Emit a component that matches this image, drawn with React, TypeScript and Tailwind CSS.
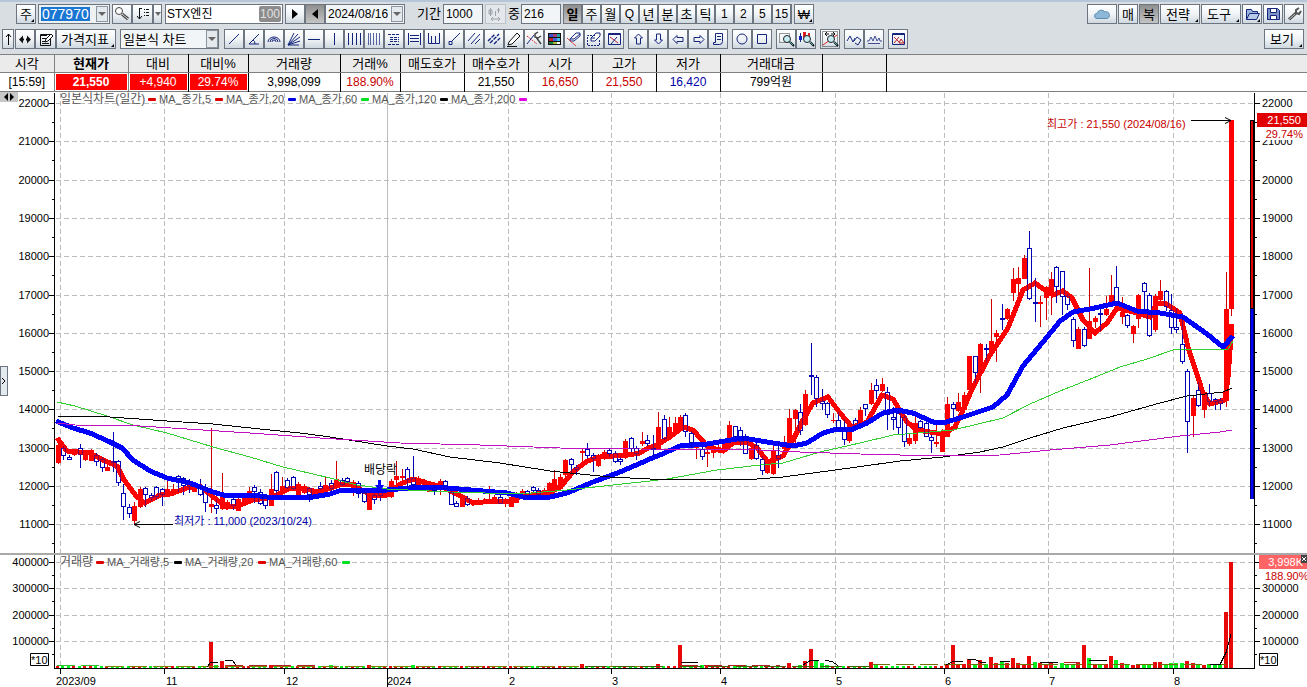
import type { ReactNode } from 'react';
import clsx from 'clsx';

type Candle = [kind: 'r' | 'b', high: number, top: number, bottom: number, low: number];

const FIRST_X = 58;
const STEP = 5.456;

// one entry per trading day: r = up, b = down
const candles: Candle[] = [
  ['r', 440, 445, 463, 464], ['b', 446, 448, 456, 460], ['b', 455, 457, 460, 460], ['r', 449, 450, 455, 456],
  ['b', 444, 448, 455, 468], ['r', 450, 451, 460, 461], ['r', 449, 450, 461, 461], ['b', 453, 455, 462, 466],
  ['b', 457, 459, 468, 472], ['r', 465, 467, 471, 471], ['b', 432, 461, 463, 472], ['b', 460, 461, 483, 486],
  ['b', 484, 493, 507, 520], ['b', 504, 507, 514, 518], ['r', 502, 506, 521, 524], ['r', 487, 489, 507, 508],
  ['b', 487, 488, 495, 507], ['b', 493, 495, 498, 501], ['b', 486, 487, 497, 500], ['b', 488, 489, 495, 506],
  ['r', 478, 489, 495, 496], ['r', 484, 489, 495, 496], ['b', 475, 476, 480, 492], ['b', 477, 478, 486, 495],
  ['b', 479, 482, 487, 493], ['r', 484, 486, 492, 492], ['b', 479, 487, 495, 496], ['b', 484, 487, 503, 512],
  ['r', 428, 504, 507, 513], ['b', 500, 505, 509, 514], ['r', 473, 497, 509, 510], ['r', 500, 502, 509, 510],
  ['b', 498, 499, 506, 510], ['r', 496, 499, 511, 511], ['r', 495, 497, 504, 505], ['r', 487, 491, 500, 501],
  ['b', 485, 487, 492, 503], ['b', 489, 492, 504, 505], ['b', 494, 496, 506, 509], ['r', 474, 489, 506, 506],
  ['b', 471, 472, 491, 495], ['r', 477, 486, 493, 494], ['b', 478, 480, 488, 489], ['b', 476, 477, 489, 490],
  ['r', 482, 484, 495, 495], ['r', 484, 486, 493, 494], ['b', 487, 488, 495, 502], ['r', 489, 490, 496, 497],
  ['b', 482, 486, 489, 490], ['r', 477, 485, 493, 494], ['b', 480, 483, 489, 492], ['r', 461, 479, 488, 490],
  ['b', 478, 480, 485, 486], ['b', 477, 478, 482, 483], ['r', 480, 482, 491, 496], ['b', 481, 483, 494, 498],
  ['b', 490, 493, 502, 503], ['r', 489, 490, 510, 510], ['b', 493, 495, 500, 504], ['b', 489, 491, 496, 501],
  ['r', 490, 491, 497, 498], ['r', 479, 481, 497, 498], ['r', 461, 476, 480, 489], ['r', 469, 476, 478, 489],
  ['b', 467, 469, 480, 488], ['b', 456, 478, 485, 487], ['r', 476, 478, 486, 487], ['r', 479, 480, 486, 487],
  ['r', 483, 485, 492, 492], ['b', 485, 487, 491, 495], ['r', 479, 481, 488, 495], ['b', 480, 481, 489, 490],
  ['b', 490, 492, 505, 505], ['b', 501, 503, 507, 507], ['r', 496, 497, 507, 507], ['b', 496, 498, 505, 506],
  ['r', 500, 502, 505, 506], ['r', 498, 500, 504, 505], ['r', 498, 500, 503, 504], ['r', 486, 499, 503, 504],
  ['r', 495, 497, 502, 503], ['b', 495, 497, 504, 504], ['r', 498, 499, 504, 507], ['r', 495, 497, 507, 507],
  ['r', 492, 493, 503, 503], ['r', 489, 491, 496, 496], ['b', 490, 491, 496, 497], ['b', 486, 487, 491, 492],
  ['b', 488, 490, 495, 496], ['r', 488, 490, 498, 499], ['r', 482, 483, 495, 496], ['r', 470, 479, 492, 493],
  ['r', 474, 477, 489, 490], ['r', 459, 460, 475, 482], ['b', 458, 459, 465, 473], ['b', 465, 467, 470, 475],
  ['r', 448, 451, 453, 463], ['b', 443, 449, 456, 459], ['b', 453, 455, 459, 472], ['r', 454, 457, 466, 467],
  ['r', 450, 452, 459, 460], ['b', 448, 450, 454, 457], ['b', 451, 453, 462, 463], ['b', 457, 459, 462, 465],
  ['r', 439, 441, 458, 459], ['b', 437, 438, 449, 452], ['b', 446, 448, 454, 460], ['r', 432, 441, 444, 446],
  ['b', 435, 440, 444, 446], ['b', 435, 448, 450, 457], ['r', 412, 427, 449, 450], ['b', 415, 419, 439, 440],
  ['r', 417, 427, 437, 438], ['r', 417, 423, 431, 432], ['r', 415, 417, 427, 428], ['b', 413, 415, 432, 437],
  ['b', 431, 433, 443, 448], ['r', 443, 446, 448, 459], ['b', 447, 449, 457, 460], ['r', 450, 452, 454, 467],
  ['r', 443, 447, 453, 458], ['r', 440, 447, 452, 453], ['r', 441, 443, 452, 453], ['r', 421, 425, 446, 447],
  ['b', 426, 426, 437, 438], ['b', 427, 430, 442, 446], ['b', 434, 436, 454, 454], ['r', 446, 448, 459, 460],
  ['b', 443, 445, 459, 460], ['b', 456, 459, 471, 475], ['r', 459, 462, 473, 474], ['r', 441, 450, 474, 475],
  ['b', 442, 455, 459, 468], ['r', 436, 444, 449, 450], ['r', 409, 418, 446, 447], ['r', 409, 410, 419, 444],
  ['b', 404, 412, 431, 435], ['r', 390, 394, 425, 426], ['b', 343, 375, 377, 395], ['b', 375, 377, 399, 407],
  ['b', 389, 401, 404, 410], ['b', 402, 403, 415, 418], ['r', 413, 420, 421, 423], ['b', 412, 420, 429, 430],
  ['b', 419, 428, 440, 445], ['r', 420, 423, 441, 443], ['b', 418, 420, 426, 428], ['r', 407, 410, 422, 423],
  ['b', 404, 404, 409, 416], ['r', 383, 390, 404, 405], ['b', 379, 385, 391, 399], ['r', 378, 384, 391, 392],
  ['b', 387, 392, 415, 430], ['b', 407, 417, 420, 430], ['b', 411, 413, 428, 434], ['b', 415, 417, 442, 447],
  ['r', 434, 438, 444, 446], ['r', 416, 423, 441, 444], ['b', 420, 421, 428, 429], ['b', 421, 423, 437, 437],
  ['b', 435, 437, 441, 453], ['r', 424, 442, 444, 447], ['r', 429, 435, 452, 452], ['r', 397, 404, 437, 437],
  ['b', 402, 404, 409, 418], ['r', 393, 402, 411, 412], ['r', 392, 395, 410, 411], ['r', 356, 356, 390, 391],
  ['b', 356, 356, 373, 383], ['r', 343, 344, 371, 393], ['b', 344, 348, 350, 362], ['r', 299, 341, 352, 353],
  ['r', 330, 333, 337, 362], ['b', 304, 318, 320, 330], ['r', 308, 309, 319, 320], ['r', 268, 279, 293, 301],
  ['r', 267, 278, 284, 297], ['r', 255, 258, 279, 279], ['b', 231, 248, 299, 300], ['b', 278, 302, 304, 322],
  ['r', 296, 302, 304, 327], ['r', 286, 287, 298, 320], ['r', 272, 279, 295, 315], ['b', 266, 267, 287, 303],
  ['b', 271, 271, 297, 315], ['b', 294, 296, 305, 310], ['b', 317, 319, 341, 347], ['r', 327, 329, 349, 349],
  ['b', 327, 329, 346, 347], ['r', 268, 321, 339, 339], ['r', 316, 318, 322, 328], ['b', 308, 313, 315, 331],
  ['r', 296, 309, 315, 316], ['r', 275, 295, 304, 305], ['b', 266, 287, 302, 303], ['r', 297, 312, 317, 324],
  ['b', 314, 315, 326, 328], ['r', 325, 326, 334, 343], ['r', 294, 295, 319, 328], ['b', 282, 283, 292, 310],
  ['b', 293, 295, 336, 337], ['r', 294, 296, 330, 332], ['r', 280, 291, 300, 301], ['b', 290, 291, 307, 311],
  ['b', 294, 310, 328, 334], ['b', 308, 327, 330, 333], ['b', 313, 344, 362, 364], ['b', 369, 371, 422, 453],
  ['r', 395, 398, 416, 437], ['b', 382, 390, 406, 407], ['r', 390, 392, 410, 418], ['b', 384, 393, 402, 406],
  ['b', 398, 399, 402, 410], ['b', 398, 400, 404, 410], ['r', 272, 309, 401, 407], ['r', 120, 120, 309, 316],
];

// bar heights for the days with notable volume
const spikes: Record<number, number> = {
  28: 26, 29: 3, 30: 7, 39: 3, 50: 3, 57: 3, 65: 3, 96: 4, 110: 4, 114: 23, 116: 3, 118: 3, 124: 3, 126: 3,
  134: 5, 136: 3, 137: 7, 138: 19, 139: 8, 140: 5, 141: 3, 149: 6, 150: 3, 163: 4, 164: 23, 165: 4, 166: 4,
  167: 9, 168: 4, 169: 8, 170: 4, 171: 11, 172: 5, 173: 6, 174: 5, 175: 10, 176: 5, 177: 4, 178: 12, 179: 6,
  180: 5, 181: 4, 182: 5, 184: 5, 185: 3, 186: 3, 187: 5, 188: 23, 189: 10, 190: 3, 191: 3, 192: 4, 193: 12,
  194: 8, 195: 5, 196: 4, 197: 3, 198: 4, 199: 4, 200: 4, 201: 6, 202: 6, 203: 4, 204: 5, 205: 5, 206: 5,
  207: 7, 208: 5, 209: 4, 210: 3, 211: 4, 212: 3, 213: 4, 214: 56, 215: 106,
};
const upDays = [138, 164, 178, 188, 207];
const downDays = [189];

const MA5 =
  '57,438 67,451 90,453 103,460 117,466 124,480 137,497 145,503 160,495 170,494 187,488 200,486 217,500 227,507 238,506 253,500 267,498 277,495 290,488 303,488 317,492 328,489 342,484 353,485 365,492 375,496 387,495 400,484 413,479 427,483 443,487 457,494 473,503 493,501 510,501 520,497 537,494 550,493 562,485 573,472 587,461 600,457 613,456 628,455 640,453 648,448 657,445 670,437 683,427 693,430 708,447 723,451 733,443 747,442 757,448 768,462 783,456 793,440 803,420 813,403 828,397 840,413 852,427 867,422 882,395 893,399 907,422 917,430 930,432 943,434 955,427 963,410 973,387 990,355 1008,328 1023,290 1035,283 1045,290 1053,295 1063,291 1072,298 1083,320 1095,333 1107,323 1117,308 1133,312 1150,317 1157,303 1165,303 1180,313 1188,347 1203,393 1210,404 1225,400 1228,377 1232,324';
const MA20 =
  '56,421 73,428 90,433 110,442 122,448 133,460 150,471 167,478 190,483 213,492 227,496 253,495 267,497 313,497 330,494 342,490 387,490 420,487 447,488 507,493 523,497 550,497 567,493 593,482 620,472 650,459 660,455 680,446 707,444 743,438 773,443 793,446 807,443 823,433 837,429 853,429 867,423 883,413 897,410 913,413 933,422 943,423 963,417 993,407 1007,395 1023,366 1043,342 1060,321 1073,312 1090,309 1117,303 1137,311 1160,313 1183,317 1207,334 1223,347 1233,336';
const MA60 =
  '57,402 75,406 107,416 133,425 167,433 213,447 250,457 283,467 313,474 330,478 357,485 387,489 450,492 520,494 567,490 650,481 667,479 717,470 760,465 783,463 820,452 860,443 893,435 930,432 953,430 1003,418 1030,404 1060,391 1093,378 1120,367 1147,359 1173,350 1187,349 1228,349 1233,341';
const MA120 =
  '57,416 110,417 167,421 213,424 260,429 300,433 330,437 387,446 413,449 450,457 500,463 550,471 610,477 650,479 757,479 783,477 850,468 900,461 943,457 980,452 1003,447 1030,438 1063,428 1110,417 1160,403 1187,396 1223,392 1232,388';
const MA200 =
  '57,423 75,425 140,426 187,429 250,433 320,438 400,443 480,445 560,448 640,449 760,450 800,452 860,454 940,456 1000,455 1050,450 1110,445 1180,436 1220,432 1232,430';

const prices = Array.from({ length: 12 }, (_, i) => ({
  label: 22000 - i * 1000,
  y: Math.round(103 + i * 38.3),
}));
const volumes = [
  { label: 400000, y: 562 },
  { label: 300000, y: 588 },
  { label: 200000, y: 615 },
  { label: 100000, y: 641 },
];
const months = [
  { label: '2023/09', x: 60, at: 56 },
  { label: '11', x: 164, at: 166 },
  { label: '12', x: 284, at: 286 },
  { label: '2024', x: 387, at: 387 },
  { label: '2', x: 508, at: 509 },
  { label: '3', x: 611, at: 612 },
  { label: '4', x: 720, at: 721 },
  { label: '5', x: 835, at: 836 },
  { label: '6', x: 944, at: 945 },
  { label: '7', x: 1048, at: 1049 },
  { label: '8', x: 1173, at: 1174 },
];

interface LegendItem {
  text: string;
  x: number;
  dash: number;
  color: string;
  size?: number;
}

const legend: LegendItem[] = [
  { text: '일본식차트(일간)', x: 60, dash: 148, color: '#e00000', size: 12 },
  { text: 'MA_종가,5', x: 159, dash: 215, color: '#e00000' },
  { text: 'MA_종가,20', x: 226, dash: 288, color: '#0000e0' },
  { text: 'MA_종가,60', x: 299, dash: 361, color: '#00e020' },
  { text: 'MA_종가,120', x: 372, dash: 440, color: '#000' },
  { text: 'MA_종가,200', x: 451, dash: 519, color: '#e000e0' },
];
const volumeLegend: LegendItem[] = [
  { text: '거래량', x: 60, dash: 96, color: '#e00000', size: 12 },
  { text: 'MA_거래량,5', x: 107, dash: 174, color: '#000' },
  { text: 'MA_거래량,20', x: 185, dash: 258, color: '#e00000' },
  { text: 'MA_거래량,60', x: 269, dash: 342, color: '#00e020' },
];

const quote = [
  { title: '시각', value: '[15:59]', width: 'w-[54px]' },
  { title: '현재가', value: '21,550', width: 'w-[74px]', fill: true, bold: true },
  { title: '대비', value: '+4,940', width: 'w-[60px]', fill: true },
  { title: '대비%', value: '29.74%', width: 'w-[60px]', fill: true },
  { title: '거래량', value: '3,998,099', width: 'w-[92px]' },
  { title: '거래%', value: '188.90%', width: 'w-[60px]', color: 'text-[#c80000]' },
  { title: '매도호가', value: '', width: 'w-[64px]' },
  { title: '매수호가', value: '21,550', width: 'w-[64px]' },
  { title: '시가', value: '16,650', width: 'w-[64px]', color: 'text-[#c80000]' },
  { title: '고가', value: '21,550', width: 'w-[64px]', color: 'text-[#c80000]' },
  { title: '저가', value: '16,420', width: 'w-[64px]', color: 'text-[#0000a8]' },
  { title: '거래대금', value: '799억원', width: 'w-[102px]' },
  { title: '', value: '', width: 'w-[64px]' },
  { title: '', value: '', width: 'w-auto' },
];

interface BtnProps {
  children: ReactNode;
  label?: string;
  width?: string;
  active?: boolean;
  menu?: boolean;
}

function Btn({ children, label, width = 'w-5', active, menu }: BtnProps) {
  return (
    <button
      type="button"
      aria-label={label}
      className={clsx(
        'relative flex h-5 shrink-0 items-center justify-center border border-[#6c7580] text-[13px] leading-none',
        width,
        active
          ? 'bg-linear-to-b from-[#8f8f8f] to-[#c4c4c4]'
          : 'bg-linear-to-b from-white via-[#f0f4f7] to-[#cfd8df]'
      )}
    >
      {children}
      {menu && (
        <svg viewBox="0 0 3 3" className="absolute right-px bottom-px h-[3px] w-[3px]">
          <path d="M3 0v3H0z" />
        </svg>
      )}
    </button>
  );
}

function Icon({ children }: { children: ReactNode }) {
  return (
    <svg viewBox="0 0 18 18" className="h-[18px] w-[18px] shrink-0" fill="none" stroke="#15257c">
      {children}
    </svg>
  );
}

function Caret() {
  return (
    <span className="pointer-events-none absolute inset-y-px right-px flex w-3 items-center justify-center border border-[#8d969e] bg-[#e4e9ed]">
      <svg viewBox="0 0 8 4" className="h-1 w-2 shrink-0">
        <path d="M0 0h8L4 4z" fill="#666" />
      </svg>
    </span>
  );
}

const lens = (
  <>
    <circle cx="10" cy="9" r="3.5" fill="#c5eef4" stroke="#222" />
    <path d="M13 12l4 4" stroke="#111" strokeWidth="2" />
    <path d="M13 12l3 3" stroke="#4ab" />
  </>
);

const drawTools: { label: string; icon: ReactNode }[] = [
  { label: '추세선', icon: <path d="M4 14L14 4" /> },
  { label: '각도선', icon: <path d="M14 4L4 14h10M8 10q2 1 2 4" /> },
  { label: '원호', icon: <path d="M3 12a6 5 0 0 1 12 0M5 12a4 3.5 0 0 1 8 0M7 12a2 2 0 0 1 4 0" /> },
  { label: '팬', icon: <path d="M3 15L9 3M3 15L13 4M3 15L15 7M3 15l12-4M3 15h11" /> },
  { label: '수평선', icon: <path d="M3 9.5h12" /> },
  { label: '수직선', icon: <path d="M9.5 3v12" /> },
  { label: '수직 분할', icon: <path d="M3.5 3v12M7.5 3v12M11.5 3v12M15.5 3v12" /> },
  { label: '시간대', icon: <path d="M3.5 3v12M5.5 3v12M8.5 3v12M11.5 3v12M14.5 3v12" strokeWidth=".7" /> },
  { label: '되돌림', icon: <path d="M3 4.500h12M3 14.500h12M5 7.500h9M5 9.500h9M5 11.500h9" strokeDasharray="3 1" /> },
  { label: '등분선', icon: <path d="M3.500 3v12M15.500 3v12M5 5.500h9M5 8.500h9M5 11.500h9" /> },
  { label: '주기선', icon: <path d="M3.5 3v10.5h3V6v7.5h4V6v7.5h4V3" /> },
  { label: '선분', icon: <path d="M15 3L7 11M4 11.5h3v3H4z" /> },
  { label: '평행선', icon: <path d="M3 11l7-8M6 14l9-10M10 14l5-5" /> },
  { label: '채널', icon: <path d="M3 11l7-7M5 13l9-9M9 14l6-6" strokeWidth="1.4" strokeDasharray="4 1" /> },
  {
    label: '펜',
    icon: <path d="M4 12L12 3l3 3-8 8-4 1zM2 16.5h10" stroke="#111" fill="#fff" />,
  },
  {
    label: '설정',
    icon: (
      <>
        <path d="M2 6l10 8" stroke="#e02020" strokeDasharray="2 1" />
        <path d="M2 14L9 5" />
        <path d="M11 7l5 7M13 2l-3 2v3l3 1 3-2" stroke="#444" strokeWidth="1.5" />
      </>
    ),
  },
  {
    label: '색상',
    icon: (
      <g stroke="none">
        <path d="M3 3h13v12H3z" fill="#111" />
        <path d="M4 4h4v3H4z" fill="#3c50c8" />
        <path d="M8 4h4v3H8z" fill="#a04080" />
        <path d="M12 4h3v3h-3z" fill="#20a0a0" />
        <path d="M4 8h4v3H4z" fill="#c02020" />
        <path d="M8 8h4v3H8z" fill="#4060e0" />
        <path d="M12 8h3v3h-3z" fill="#40c0e0" />
        <path d="M4 12h4v2H4z" fill="#208040" />
        <path d="M8 12h4v2H8z" fill="#a0c040" />
        <path d="M12 12h3v2h-3z" fill="#fff" />
      </g>
    ),
  },
  {
    label: '지우개',
    icon: (
      <>
        <path d="M5 9l6-6h4v3l-6 5H5zM5 9h4l6-5" fill="#fff" />
        <path d="M2 8l9 8" stroke="#e04040" />
      </>
    ),
  },
  {
    label: '선택 지우기',
    icon: (
      <>
        <path d="M6 8l5-5h4v3l-5 5H6zM6 8h4" fill="#fff" />
        <path d="M10 5.5H2.5v10h12V9" strokeDasharray="2 1" />
      </>
    ),
  },
  {
    label: '전체 지우기',
    icon: (
      <>
        <path d="M3.5 3.5h12v11h-12zM3 4.5h13" />
        <path d="M5 7l8 6" stroke="#c02040" />
        <path d="M12 7l-6 7" />
      </>
    ),
  },
];

const arrowTools = [
  { label: '위', d: 'M9.5 4l4 4h-2v6h-4V8h-2z' },
  { label: '아래', d: 'M9.5 14l4-4h-2V4h-4v6h-2z' },
  { label: '왼쪽', d: 'M4 9.5l4-4v2h6v4H8v2z' },
  { label: '오른쪽', d: 'M15 9.5l-4-4v2H5v4h6v2z' },
  { label: '메모', d: 'M6.5 3.5h7v8q0 3-3 3h-6v-2h2zM8 6.5h4M8 9.5h4' },
];

function TopToolbar() {
  return (
    <div className="flex items-center pt-1 pr-[3px] pl-4">
      <Btn menu>주</Btn>
      <div className="relative ml-0.5 h-5 w-[72px] border border-[#6c7580] bg-[#eef2f5] p-0.5">
        <input
          aria-label="종목코드"
          defaultValue="077970"
          className="h-full w-[49px] bg-[#1976d2] px-px text-sm leading-none text-white"
        />
        <Caret />
      </div>
      <div className="ml-0.5 flex">
        <Btn label="종목 검색">
          <Icon>
            <circle cx="6" cy="6" r="3.5" stroke="#444" fill="#fff" />
            <path d="M9 9l6 5" stroke="#444" strokeWidth="3" />
            <path d="M9 9l6 5" stroke="#ddd" />
          </Icon>
        </Btn>
        <Btn label="정렬" width="w-[21px]">
          <Icon>
            <path d="M5.5 3v11M3 11l2.5 3L8 11M5 3.5h3" stroke="#111" />
            <path d="M10 4.500h5M10 7.500h5M10 10.500h5" stroke="#111" strokeDasharray="1 1 3" />
          </Icon>
        </Btn>
        <Btn label="정렬 메뉴" width="w-[9px]">
          <svg viewBox="0 0 6 4" className="h-1 w-1.5 shrink-0">
            <path d="M0 0h6L3 4z" fill="#666" />
          </svg>
        </Btn>
      </div>
      <div className="ml-[3px] flex h-5 w-[118px] items-center border border-[#6c7580] bg-white pr-px">
        <input aria-label="종목명" defaultValue="STX엔진" className="w-full min-w-0 px-px" />
        <span className="rounded-xs bg-[#8c8c8c] px-px leading-4 text-[#e0e0e0]">100</span>
      </div>
      <div className="ml-0.5 flex">
        <Btn label="다음">
          <svg viewBox="0 0 6 10" className="h-2.5 w-1.5">
            <path d="M0 0l6 5-6 5z" />
          </svg>
        </Btn>
        <Btn label="이전" active>
          <svg viewBox="0 0 6 10" className="h-2.5 w-1.5">
            <path d="M6 0L0 5l6 5z" />
          </svg>
        </Btn>
      </div>
      <div className="relative h-5 w-20 border border-[#6c7580] bg-[#f2f5f7]">
        <input aria-label="날짜" defaultValue="2024/08/16" className="h-full w-16 px-0.5" />
        <Caret />
      </div>
      <label className="ml-3 flex items-center gap-0.5 text-[13px]">
        기간
        <input defaultValue="1000" className="h-5 w-10 border border-[#6c7580] bg-[#f2f5f7] px-0.5 text-xs" />
      </label>
      <button
        type="button"
        aria-label="봉 조절"
        className="ml-0.5 flex h-5 w-[21px] items-center justify-center border border-[#bcc3c9] bg-[#e4e8ec]"
      >
        <Icon>
          <path
            d="M4.5 3v8M3 5h3v4H3zM9.5 6v5M12.5 3v5M11 5h3M5 14h9M7 12l-2 2 2 2M12 12l2 2-2 2"
            stroke="#9aa1a8"
          />
        </Icon>
      </button>
      <label className="ml-0.5 flex items-center gap-px text-[13px]">
        중
        <input defaultValue="216" className="h-5 w-10 border border-[#6c7580] bg-[#f2f5f7] px-0.5 text-xs" />
      </label>
      <div className="ml-0.5 flex border-r border-[#6c7580]">
        {['일', '주', '월', 'Q', '년', '분', '초', '틱', '1', '2', '5', '15'].map((period, i) => (
          <Btn key={period} width="w-[19px]" active={i === 0}>
            <span className={clsx(i === 0 && 'font-bold', /\w/.test(period) && 'text-xs')}>{period}</span>
          </Btn>
        ))}
      </div>
      <div className="ml-0.5 flex">
        <Btn menu>₩</Btn>
      </div>
      <div className="ml-auto flex gap-px">
        <Btn label="클라우드" width="w-[30px]">
          <svg viewBox="0 0 16 10" className="h-2.5 w-4">
            <path
              d="M3 9.5a2.5 2.5 0 0 1 0-5 4.500 4.500 0 0 1 8-1.500 3.300 3.300 0 0 1 2 6.500z"
              fill="#8db8d8"
              stroke="#5e8db0"
            />
          </svg>
        </Btn>
        <Btn>매</Btn>
        <Btn active>복</Btn>
        <Btn width="w-10" menu>
          <span className="pr-1">전략</span>
        </Btn>
        <Btn width="w-10" menu>
          <span className="pr-1">도구</span>
        </Btn>
        <Btn label="열기" menu>
          <Icon>
            <path d="M3.5 14.5v-10h5l1 2h5v2" fill="#9db4dc" />
            <path d="M3.5 14.5l3-6h10l-3 6z" fill="#b8c9e8" />
          </Icon>
        </Btn>
        <Btn label="저장">
          <Icon>
            <path d="M3.5 3.5h10l2 2v9h-12z" fill="#7f93c8" />
            <path d="M6.5 3.5h6v4h-6zM6.5 10.5h6v4h-6z" fill="#fff" />
          </Icon>
        </Btn>
        <Btn label="환경설정">
          <Icon>
            <path d="M4 14.5L11 8" stroke="#444" strokeWidth="3" />
            <path d="M14 3l-3 2v3l3 1 2-3" stroke="#555" strokeWidth="2" />
            <path d="M4 14.5L10 9" stroke="#ccc" />
          </Icon>
        </Btn>
      </div>
    </div>
  );
}

function DrawToolbar() {
  return (
    <div className="flex items-center pt-[5px] pr-[3px] pb-[5px] pl-0.5">
      <Btn label="위로" width="w-3">
        <svg viewBox="0 0 7 12" className="h-3 w-[7px] shrink-0">
          <path d="M3.5 1v11M1 4l2.500-3L6 4" fill="none" stroke="#000" />
        </svg>
      </Btn>
      <div className="ml-px flex">
        <Btn label="좌우 이동">
          <Icon>
            <path d="M3 9.5l4-4v8zM15 9.5l-4-4v8z" fill="#111" stroke="none" />
            <path d="M6 9.5h2M10 9.5h2" stroke="#111" strokeWidth="2" />
          </Icon>
        </Btn>
        <Btn label="지표 편집" width="w-[21px]">
          <Icon>
            <path d="M3.5 4.5h10v11h-10zM3 5.5h7M5 8.5h4M5 11.5h4M5 13.5h7" stroke="#111" />
            <path d="M9 9l5-5 2 2-5 5-3 1z" fill="#fff" stroke="#111" />
          </Icon>
        </Btn>
        <Btn width="w-[60px]" menu>
          <span className="pr-0.5">가격지표</span>
        </Btn>
      </div>
      <div className="relative ml-1 h-5 w-[99px]">
        <select
          aria-label="차트 종류"
          className="h-full w-full appearance-none border border-[#6c7580] bg-[#f2f5f7] px-0.5 text-[13px] leading-none"
        >
          <option>일본식 차트</option>
        </select>
        <Caret />
      </div>
      <div className="ml-[5px] flex">
        {drawTools.map(({ label, icon }) => (
          <Btn key={label} label={label}>
            <Icon>{icon}</Icon>
          </Btn>
        ))}
      </div>
      <div className="ml-1 flex">
        {arrowTools.map(({ label, d }) => (
          <Btn key={label} label={label}>
            <Icon>
              <path d={d} />
            </Icon>
          </Btn>
        ))}
      </div>
      <div className="ml-1 flex">
        <Btn label="원">
          <Icon>
            <circle cx="9" cy="9" r="5" />
          </Icon>
        </Btn>
        <Btn label="사각형">
          <Icon>
            <path d="M4.5 4.5h9v9h-9z" />
          </Icon>
        </Btn>
      </div>
      <div className="ml-1 flex">
        <Btn label="영역 확대">
          <Icon>
            <path d="M2.5 3.5h10v9h-10z" stroke="#333" strokeDasharray="1 1" />
            {lens}
          </Icon>
        </Btn>
        <Btn label="봉 확대">
          <Icon>
            <path d="M3.5 3v9M7.5 2v5M11.5 3v4" />
            <path d="M2 6h3v4H2z" fill="#1020c0" stroke="none" />
            <path d="M6 2h3v6H6zM11 3h2v3h-2z" fill="#e02020" stroke="none" />
            {lens}
          </Icon>
        </Btn>
      </div>
      <div className="ml-1 flex">
        <Btn label="전체 보기">
          <Icon>
            <path d="M1.5 1.5h15v15h-15z" stroke="#333" strokeDasharray="1 1" />
            <path d="M2 15l14-10" stroke="#e02020" />
            <path d="M4 4h4M10 4h4M6 2L4 4l2 2M12 2l2 2-2 2" stroke="#111" />
            {lens}
          </Icon>
        </Btn>
      </div>
      <div className="ml-1 flex">
        <Btn label="파동">
          <Icon>
            <path d="M2 11l3-5 3 6 2-4M9 11l3-4 4 3-3 5-3-2" />
          </Icon>
        </Btn>
        <Btn label="패턴">
          <Icon>
            <path d="M2 11h2l2-4 2 4 2-5 2 5 2-3 1 3h2M3 13.5h12" strokeWidth=".8" />
          </Icon>
        </Btn>
      </div>
      <div className="ml-1 flex">
        <Btn label="차트 닫기">
          <Icon>
            <path d="M3.5 3.5h12v11h-12zM3 4.5h13" />
            <path d="M5 7l5 5M5 13l5-6M10 13l2-4 3 4z" stroke="#c02020" />
          </Icon>
        </Btn>
      </div>
      <div className="ml-auto flex">
        <Btn width="w-10" menu>
          <span className="pr-1">보기</span>
        </Btn>
      </div>
    </div>
  );
}

function QuoteTable() {
  return (
    <table className="w-full table-fixed border-collapse border-y border-[#808080] text-center">
      <thead>
        <tr className="h-[18px] bg-[#ebebeb]">
          {quote.map(({ title, width, bold }, i) => (
            <th
              key={i}
              className={clsx(
                'border-b border-b-[#808080] p-0 text-[13px] leading-4',
                width,
                i < 13 && 'border-r',
                i < 2 ? 'border-r-[#808080]' : 'border-r-black',
                bold ? 'font-bold' : 'font-normal'
              )}
            >
              {title}
            </th>
          ))}
        </tr>
      </thead>
      <tbody>
        <tr className="h-[19px] bg-white">
          {quote.map(({ value, color, fill, bold }, i) => (
            <td
              key={i}
              className={clsx(
                'p-px leading-4',
                i < 13 && 'border-r',
                i < 2 ? 'border-r-[#808080]' : 'border-r-black',
                color,
                bold && 'font-bold'
              )}
            >
              {fill ? <div className="bg-[#ff0000] text-white">{value}</div> : value}
            </td>
          ))}
        </tr>
      </tbody>
    </table>
  );
}

function Candles({ outline }: { outline?: boolean }) {
  return (
    <g shapeRendering="crispEdges">
      {candles.map(([kind, high, top, bottom, low], i) => {
        const x = Math.round(FIRST_X + i * STEP);
        if (kind === 'r') {
          if (outline) return null;
          return (
            <g key={i} fill="#ff0000">
              <rect x={x} y={high} width={1} height={low - high} fill="#d00000" />
              <rect x={x - 2} y={top} width={5} height={bottom - top} />
            </g>
          );
        }
        const flat = bottom - top < 3;
        return (
          <g key={i} fill="#0000b4">
            <rect x={x} y={high} width={1} height={Math.max(top - high, 0)} />
            <rect x={x} y={bottom} width={1} height={Math.max(low - bottom, 0)} />
            <path
              d={
                flat
                  ? `M${x - 2} ${top}h5v${bottom - top}h-5z`
                  : `M${x - 2} ${top}h5v${bottom - top}h-5zM${x - 1} ${top + 1}v${bottom - top - 2}h3v-${bottom - top - 2}z`
              }
            />
            {!flat && !outline && (
              <rect x={x - 1} y={top + 1} width={3} height={bottom - top - 2} fill="#fff" />
            )}
          </g>
        );
      })}
    </g>
  );
}

function Legend({ items, y }: { items: LegendItem[]; y: number }) {
  return (
    <>
      {items.map(({ text, x, dash, color, size = 11 }) => (
        <g key={text}>
          <text x={x} y={y} fontSize={size} fill="#555">
            {text}
          </text>
          <rect x={dash} y={y - 5} width={8} height={3} rx={1} fill={color} />
        </g>
      ))}
    </>
  );
}

function Chart() {
  const gridYs = [...prices, ...volumes].map(({ y }) => y);
  const halfYs = [...prices.map(({ y }) => y + 19), ...volumes.map(({ y }) => y + 13)];

  return (
    <svg
      viewBox="0 92 1307 595"
      className="block w-full bg-white text-[11px]"
      role="img"
      aria-label="STX엔진 일봉 차트"
    >
      <g stroke="#bdbdbd" strokeDasharray="5 3" shapeRendering="crispEdges">
        {gridYs.map((y) => (
          <path key={y} d={`M56 ${y}.5H1253`} />
        ))}
        {months.map(({ x, label }) => (
          <path key={x} d={`M${x}.5 93V667`} strokeDasharray={label === '2024' ? 'none' : undefined} />
        ))}
      </g>

      <Candles />
      <g fill="none" shapeRendering="crispEdges">
        <polyline points={MA5} stroke="#ff0000" strokeWidth={5} />
        <polyline points={MA20} stroke="#0000ff" strokeWidth={5} />
        <polyline points={MA60} stroke="#30d030" />
        <polyline points={MA120} stroke="#000" />
        <polyline points={MA200} stroke="#c010c0" />
      </g>
      <g opacity={0.5}>
        <Candles outline />
      </g>
      <path d="M378 480h3v5h3l-4 7-5-7h3z" fill="#0000ff" />

      <g shapeRendering="crispEdges">
        <rect x={1250} y={120} width={4} height={190} fill="#000" />
        <rect x={1251} y={121} width={2} height={187} fill="#e00000" />
        <rect x={1250} y={309} width={4} height={190} fill="#000070" />
        <rect x={1251} y={309} width={2} height={190} fill="#0000ff" />
      </g>

      <g shapeRendering="crispEdges">
        {candles.map(([kind], i) => {
          const h = spikes[i] ?? 2;
          const up = (kind === 'r' || upDays.includes(i)) && !downDays.includes(i);
          return (
            <rect
              key={i}
              x={Math.round(FIRST_X + i * STEP) - 2}
              y={668 - h}
              width={h > 2 ? 4 : 3}
              height={h}
              fill={up ? '#e80808' : '#00f020'}
            />
          );
        })}
        <g fill="none">
          <path d="M57 665.5h42" stroke="#30c030" strokeDasharray="18 6" />
          <path d="M105 666.5H640" stroke="#808000" strokeDasharray="18 6" />
          <path d="M225 665.5H320M680 665.5H780M1040 662.5h40" stroke="#b02020" strokeDasharray="18 6" />
          <path d="M585 666.5h85M680 666.5H870" stroke="#406000" strokeDasharray="22 6" />
          <path d="M872 664.5H1228" stroke="#707000" strokeDasharray="18 6" />
          <path
            d="M207 667l4-5h7M225 660h7l4 5M681 662.5h17M803 665l8-5h8M825 660.5l7 1 6 4M946 665l8-4h9M968 659.5h7l6 3h5M1000 661.5h10M1040 662.5h18M1089 660.5h18M1210 664.5h10l6-12 5-18"
            stroke="#000"
          />
        </g>
      </g>

      <g fill="#000" shapeRendering="crispEdges">
        <rect x={54} y={93} width={1} height={575} />
        <rect x={1254} y={93} width={1} height={575} />
        <rect x={54} y={668} width={1201} height={1} />
        {gridYs.map((y) => (
          <g key={y}>
            <rect x={49} y={y} width={6} height={1} />
            <rect x={1254} y={y} width={6} height={1} />
          </g>
        ))}
        {halfYs.map((y) => (
          <g key={y}>
            <rect x={52} y={y} width={3} height={1} />
            <rect x={1254} y={y} width={3} height={1} />
          </g>
        ))}
        {months.map(({ x, label }) => (
          <rect key={x} x={x} y={668} width={1} height={label === '2024' ? 19 : 6} />
        ))}
      </g>
      <rect x={0} y={553} width={1307} height={2} fill="#a9a9a9" />

      {[...prices, ...volumes].map(({ label, y }) => (
        <g key={label}>
          <text x={49} y={y + 4} textAnchor="end">
            {label}
          </text>
          {label !== 400000 && (
            <text x={1262} y={y + 4}>
              {label}
            </text>
          )}
        </g>
      ))}
      {months.map(({ label, at }) => (
        <text key={label} x={at} y={685}>
          {label}
        </text>
      ))}
      <g>
        <path d="M30.5 653.5h18v12h-18zM1259.5 653.5h18v12h-18z" fill="#fff" stroke="#000" />
        <text x={31} y={664}>
          *10
        </text>
        <text x={1260} y={664}>
          *10
        </text>
      </g>

      <Legend items={legend} y={103} />
      <Legend items={volumeLegend} y={566} />

      <text x={364} y={474} fontSize={12}>
        배당락
      </text>
      <text x={1047} y={128} fill="#c80000">
        최고가 : 21,550 (2024/08/16)
      </text>
      <path d="M1191 120.5h40M1225 117.5l6 3-6 3" fill="none" stroke="#000" />
      <text x={174} y={525} fill="#0000a8">
        최저가 : 11,000 (2023/10/24)
      </text>
      <path d="M173 524.5h-39M140 521.5l-6 3 6 3" fill="none" stroke="#000" />

      <rect x={1261} y={128} width={46} height={12} fill="#fff" />
      <rect x={1257} y={113} width={50} height={14} fill="#e00000" />
      <text x={1301} y={124} textAnchor="end" fill="#fff">
        21,550
      </text>
      <text x={1303} y={138} textAnchor="end" fill="#c80000">
        29.74%
      </text>
      <rect x={1259} y={555} width={48} height={14} fill="#ff6464" />
      <text x={1303} y={566} textAnchor="end" fill="#fff">
        3,998K
      </text>
      <text x={1265} y={580} fill="#c80000">
        188.90%
      </text>
      <rect x={1301} y={555} width={6} height={8} fill="#444" />
      <path d="M1302 557l4 4M1306 557l-4 4" stroke="#fff" />
    </svg>
  );
}

export default function App() {
  return (
    <main className="bg-white font-['Liberation_Sans','Noto_Sans_CJK_KR',sans-serif] text-xs text-black">
      <header className="border-t-2 border-[#b6c6d8] bg-[#d9dee3]">
        <div className="-mt-0.5">
          <TopToolbar />
          <DrawToolbar />
        </div>
      </header>
      <QuoteTable />
      <section className="relative">
        <Chart />
        <button
          type="button"
          aria-label="축 이동"
          className="absolute top-0 left-0 flex h-2.5 w-[18px] items-center justify-center bg-[#c8c8c8]"
        >
          <svg viewBox="0 0 12 8" className="h-2 w-3">
            <path d="M5 0v8L1 4zM7 0v8l4-4z" />
          </svg>
        </button>
        <button
          type="button"
          aria-label="패널 열기"
          className="absolute top-[46%] left-0 flex h-[30px] w-2 items-center justify-center border border-[#6c7580] bg-[#e4e9ed]"
        >
          <svg viewBox="0 0 4 6" className="h-1.5 w-1 shrink-0">
            <path d="M0 0l3 3-3 3" fill="none" stroke="#000" />
          </svg>
        </button>
      </section>
    </main>
  );
}
